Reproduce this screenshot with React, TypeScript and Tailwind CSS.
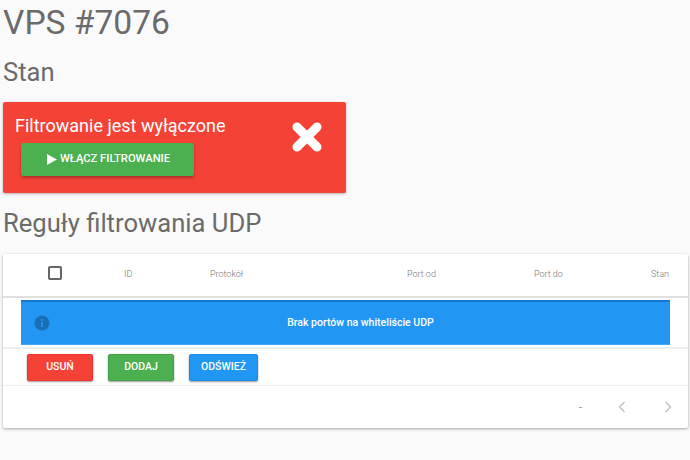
export default function App() {
  return (
    <div className="w-[690px] h-[460px] overflow-hidden bg-[#fafafa] pl-[3px] pr-[2px] text-[#6b6b6b]" style={{ fontFamily: "Roboto, sans-serif" }}>
      <h1 className="text-[33.6px] leading-[46px] h-[46px] font-normal">VPS #7076</h1>
      <h2 className="mt-[10px] text-[25.6px] leading-[32px] h-[32px] font-normal">Stan</h2>
      <div className="mt-[14px] w-[343px] h-[91px] bg-[#f44336] rounded-[2px] shadow-[0_1px_3px_rgba(0,0,0,0.3)] flex text-white">
        <div className="flex-1 pl-[12px] pt-[12px]">
          <div className="text-[18px] leading-[24px]">Filtrowanie jest wyłączone</div>
          <div className="ml-[6px] mt-[5px] w-[173px] h-[33px] pl-[2px] bg-[#4caf50] rounded-[2px] shadow-[0_2px_3px_rgba(0,0,0,0.3)] flex items-center justify-center text-[11.2px] font-medium">
            <svg width="10" height="11" viewBox="0 0 10 11" className="mr-[3px]">
              <path d="M0 0 L10 5.5 L0 11 Z" fill="#fff" />
            </svg>
            <span>WŁĄCZ FILTROWANIE</span>
          </div>
        </div>
        <svg width="30" height="30" viewBox="0 0 30 30" className="mr-[24px] mt-[20px]">
          <path d="M5 5 L25 25 M25 5 L5 25" stroke="#fff" strokeWidth="9" strokeLinecap="round" />
        </svg>
      </div>
      <h2 className="mt-[14px] text-[25.6px] leading-[32px] h-[32px] font-normal">Reguły filtrowania UDP</h2>
      <div className="mt-[15px] h-[174px] bg-white rounded-[2px] shadow-[0_1px_3px_rgba(0,0,0,0.35)] flex flex-col">
        <div className="h-[42px] flex items-center text-[9px] font-light text-[#777] border-b-[2px] border-[#e0e0e0] box-content relative">
          <div className="w-[105px] -mt-[4px]">
            <div className="w-[14px] h-[14px] ml-[45px] border-[2px] border-[#666] rounded-[2px]" />
          </div>
          <span className="ml-[16px] w-[86px]">ID</span>
          <span className="w-[197px]">Protokół</span>
          <span className="w-[127px]">Port od</span>
          <span className="w-[117px]">Port do</span>
          <span>Stan</span>
        </div>
        <div className="h-[49px] pl-[18px] pr-[18px] pt-[2px]">
          <div className="relative h-[45px] bg-[#2196f3] border-t-[2px] border-b border-t-[#1976d2] border-b-[#42a5f5] flex items-center justify-center text-white text-[10.5px] font-medium">
            <svg width="16" height="16" viewBox="0 0 16 16" className="absolute left-[13px] top-[13px]">
              <circle cx="8" cy="8" r="7.5" fill="#1a6eb5" />
              <rect x="7.1" y="7" width="1.8" height="5" fill="#2196f3" />
              <rect x="7.1" y="4" width="1.8" height="1.8" fill="#2196f3" />
            </svg>
            <span className="ml-[30px]">Brak portów na whiteliście UDP</span>
          </div>
        </div>
        <div className="h-[39px] border-t-[2px] border-b border-[#eeeeee] flex items-center pl-[24px] gap-[15px] text-white text-[10.5px] font-medium">
          <div className="w-[66px] h-[27px] bg-[#f44336] border border-[#f5302a] rounded-[2px] shadow-[0_1px_2px_rgba(0,0,0,0.4)] flex items-center justify-center">USUŃ</div>
          <div className="w-[66px] h-[27px] bg-[#4caf50] border border-[#43a047] rounded-[2px] shadow-[0_1px_2px_rgba(0,0,0,0.4)] flex items-center justify-center">DODAJ</div>
          <div className="w-[69px] h-[27px] bg-[#2196f3] border border-[#1e88e5] rounded-[2px] shadow-[0_1px_2px_rgba(0,0,0,0.4)] flex items-center justify-center">ODŚWIEŻ</div>
        </div>
        <div className="flex-1 flex items-center justify-end text-[#999] text-[12px] pr-[16px]">
          <span className="mr-[36px]">-</span>
          <svg width="8" height="12" viewBox="0 0 8 12" className="mr-[38px]"><path d="M6.5 1 L1.5 6 L6.5 11" fill="none" stroke="#bbb" strokeWidth="1.2" /></svg>
          <svg width="8" height="12" viewBox="0 0 8 12"><path d="M1.5 1 L6.5 6 L1.5 11" fill="none" stroke="#bbb" strokeWidth="1.2" /></svg>
        </div>
      </div>
    </div>
  );
}
